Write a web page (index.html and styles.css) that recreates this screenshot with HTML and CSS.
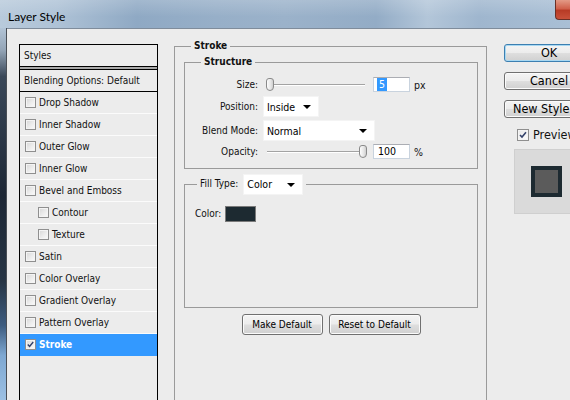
FILE: index.html
```html
<!DOCTYPE html>
<html>
<head>
<meta charset="utf-8">
<title>Layer Style</title>
<link rel="stylesheet" href="styles.css">
</head>
<body>
<div class="window">
  <header class="titlebar">
    <span class="title">Layer Style</span>
    <span class="close"></span>
  </header>
  <div class="frame">
    <div class="edge"></div>
    <main class="client">
      <nav class="styles">
        <div class="styles-head">Styles</div>
        <div class="styles-sep"></div>
        <div class="styles-blend">Blending Options: Default</div>
        <ul class="fx">
          <li class="fx-item"><span class="cb"></span>Drop Shadow</li>
          <li class="fx-item"><span class="cb"></span>Inner Shadow</li>
          <li class="fx-item"><span class="cb"></span>Outer Glow</li>
          <li class="fx-item"><span class="cb"></span>Inner Glow</li>
          <li class="fx-item"><span class="cb"></span>Bevel and Emboss</li>
          <li class="fx-item sub"><span class="cb"></span>Contour</li>
          <li class="fx-item sub"><span class="cb"></span>Texture</li>
          <li class="fx-item"><span class="cb"></span>Satin</li>
          <li class="fx-item"><span class="cb"></span>Color Overlay</li>
          <li class="fx-item"><span class="cb"></span>Gradient Overlay</li>
          <li class="fx-item"><span class="cb"></span>Pattern Overlay</li>
          <li class="fx-item active"><span class="cb"><svg class="tick" viewBox="0 0 11 11"><path d="M2.2 5.4 L4.4 7.8 L8.8 2.4"/></svg></span>Stroke</li>
        </ul>
      </nav>

      <fieldset class="group stroke">
        <legend class="legend stroke-legend">Stroke</legend>
        <div class="stroke-body">
          <fieldset class="group structure">
            <legend class="legend structure-legend">Structure</legend>
            <div class="form">
              <span class="lbl">Size:</span>
              <div class="ctl">
                <div class="slider"><span class="thumb" style="margin-left:3px"></span></div>
                <span class="field"><span class="sel">5</span></span>
                <span class="unit">px</span>
              </div>
              <span class="lbl">Position:</span>
              <div class="ctl"><span class="dropdown dd-pos">Inside<i class="arrow"></i></span></div>
              <span class="lbl">Blend Mode:</span>
              <div class="ctl"><span class="dropdown dd-blend">Normal<i class="arrow"></i></span></div>
              <span class="lbl">Opacity:</span>
              <div class="ctl">
                <div class="slider"><span class="thumb" style="margin-left:96px"></span></div>
                <span class="field">100</span>
                <span class="unit">%</span>
              </div>
            </div>
          </fieldset>

          <fieldset class="group fill">
            <legend class="legend fill-legend"><span>Fill Type:</span><span class="dropdown dd-fill">Color<i class="arrow"></i></span></legend>
            <div class="fill-body">
              <div class="color-row"><span>Color:</span><span class="swatch"></span></div>
            </div>
          </fieldset>

          <div class="defaults">
            <button class="btn btn-make">Make Default</button>
            <button class="btn btn-reset">Reset to Default</button>
          </div>
        </div>
      </fieldset>

      <aside class="actions">
        <button class="btn big focus">OK</button>
        <button class="btn big">Cancel</button>
        <button class="btn big">New Style...</button>
        <label class="preview-check"><span class="cb white"><svg class="tick" viewBox="0 0 11 11"><path d="M2.2 5.4 L4.4 7.8 L8.8 2.4"/></svg></span>Preview</label>
        <div class="preview"><div class="pv-square"></div></div>
      </aside>
    </main>
  </div>
</div>
</body>
</html>
```

FILE: styles.css
```css
html, body {
  margin: 0;
  padding: 0;
  width: 570px;
  height: 400px;
  overflow: hidden;
  background: #ececec;
}

.window {
  width: 570px;
  height: 400px;
  display: flex;
  flex-direction: column;
  font-family: "DejaVu Sans Condensed", "DejaVu Sans", sans-serif;
  font-stretch: condensed;
  font-size: 10px;
  color: #111;
}

/* ---------- title bar ---------- */
.titlebar {
  height: 28px;
  flex-shrink: 0;
  display: flex;
  align-items: flex-start;
  background:
    linear-gradient(180deg, rgba(255,255,255,0.18) 0%, rgba(255,255,255,0) 60%),
    linear-gradient(90deg, #b8cadb 0%, #aec2d6 10%, #8fa9c4 24%, #97afc8 38%, #9bb2ca 50%, #93acc6 66%, #b3c6d9 75%, #9fb6ce 84%, #a9bfd5 100%);
}
.title {
  font-family: Lato, "DejaVu Sans", sans-serif;
  font-stretch: normal;
  font-size: 12px;
  color: #000;
  margin: 9px 0 0 8px;
}
.close {
  margin-left: auto;
  width: 14px;
  height: 19px;
  border: 1px solid #6b3026;
  border-top: none;
  border-right: none;
  border-radius: 0 0 0 4px;
  background: linear-gradient(180deg, #e39a86 0%, #d0614b 45%, #b83b26 55%, #c9513a 100%);
}

/* ---------- frame ---------- */
.frame {
  flex: 1;
  display: flex;
  min-height: 0;
}
.edge {
  width: 6px;
  flex-shrink: 0;
  border-right: 1px solid #4a4f56;
  background: linear-gradient(180deg, #b2c4d6 0%, #93a4b6 6%, #3a4859 13%, #1d2735 45%, #263444 68%, #3d5c80 80%, #7ea8d2 88%, #9cc0e3 100%);
}
.client {
  flex: 1;
  min-width: 0;
  display: flex;
  align-items: flex-start;
  padding: 11px 0 0 12px;
  border-top: 1px solid #7f8c9b;
  overflow: hidden;
  background: #ececec;
}
.client > * { flex-shrink: 0; }

/* ---------- styles list ---------- */
.styles {
  margin-top: 4px;
  width: 139px;
  height: 400px;
  box-sizing: border-box;
  border: 1px solid #000;
}
.styles-head {
  height: 21px;
  line-height: 21px;
  padding-left: 4px;
  border-bottom: 1px solid #000;
}
.styles-sep {
  height: 2px;
  background: #a9a9a9;
  border-bottom: 1px solid #000;
}
.styles-blend {
  height: 21px;
  line-height: 21px;
  padding-left: 4px;
  border-bottom: 1px solid #000;
}
.fx {
  list-style: none;
  margin: 0;
  padding: 0;
}
.fx-item {
  height: 21px;
  border-bottom: 1px solid #fbfbfb;
  display: flex;
  align-items: center;
  gap: 3px;
  padding-left: 5px;
}
.fx-item.sub { padding-left: 18px; }
.fx-item.active {
  background: #3399ff;
  color: #fff;
  font-weight: bold;
  border-bottom-color: #3399ff;
}

.cb {
  width: 11px;
  height: 11px;
  box-sizing: border-box;
  border: 1px solid #8f8f8f;
  background: linear-gradient(135deg, #d6d6d6 0%, #ececec 55%, #fbfbfb 100%);
  box-shadow: inset 0 0 0 1px #f4f4f4;
  display: inline-flex;
  flex-shrink: 0;
}
.cb.white {
  width: 12px;
  height: 12px;
  background: linear-gradient(135deg, #e8e8e8 0%, #fdfdfd 100%);
}
.tick {
  width: 100%;
  height: 100%;
  fill: none;
  stroke: #33416a;
  stroke-width: 1.7;
}

/* ---------- group boxes ---------- */
.group {
  margin: 0;
  padding: 0;
  min-width: 0;
  border: 1px solid #9a9a9a;
}
.legend {
  padding: 0 3px;
  line-height: 12px;
  font-weight: bold;
  color: #111;
}
.stroke {
  width: 313px;
  height: 380px;
  box-sizing: border-box;
  margin-left: 16px;
}
.stroke-legend { margin-left: 16px; }
.stroke-body { padding: 4px 8px 0 9px; }

.structure-legend { margin-left: 16px; }
.form {
  display: grid;
  grid-template-columns: 73px auto;
  grid-template-rows: 17px 21px 21px 15px;
  column-gap: 5px;
  row-gap: 3px;
  padding: 8px 0 9px 0;
}
.lbl {
  text-align: right;
  align-self: center;
}
.ctl {
  display: flex;
  align-items: center;
}

.slider {
  width: 106px;
  height: 15px;
  box-sizing: border-box;
  display: flex;
  align-items: center;
  background:
    linear-gradient(#a3a3a3, #a3a3a3) 4px 7px / 98px 1px no-repeat,
    linear-gradient(#ffffff, #ffffff) 4px 8px / 98px 1px no-repeat;
}
.thumb {
  width: 8px;
  height: 13px;
  box-sizing: border-box;
  border: 1px solid #8a8a8a;
  border-radius: 3px 3px 4px 4px;
  background: linear-gradient(90deg, #fdfdfd 0%, #e6e6e6 60%, #cfcfcf 100%);
}
.field {
  width: 37px;
  height: 15px;
  box-sizing: border-box;
  margin-left: 4px;
  border: 1px solid #c9d3de;
  border-top-color: #abadb3;
  background: #fff;
  padding-left: 4px;
  line-height: 13px;
  font-size: 10.5px;
  color: #000;
}
.sel {
  display: inline-block;
  background: #3399ff;
  color: #fff;
  padding: 0 2px;
  margin-left: -1px;
}
.unit {
  margin-left: 4px;
  font-size: 10.5px;
}

.dropdown {
  height: 21px;
  box-sizing: border-box;
  background: #fff;
  border: 1px solid #f4f4f4;
  display: flex;
  align-items: center;
  padding-left: 3px;
  font-size: 10.5px;
  font-weight: normal;
  color: #000;
}
.arrow {
  margin-left: auto;
  margin-right: 7px;
  width: 0;
  height: 0;
  border-left: 4px solid transparent;
  border-right: 4px solid transparent;
  border-top: 4px solid #000;
}
.dd-pos { width: 56px; }
.dd-blend { width: 112px; }
.dd-fill { width: 60px; }

.fill { margin-top: 5px; }
.fill-legend {
  margin-left: 12px;
  display: flex;
  align-items: center;
  gap: 5px;
  line-height: 21px;
  font-weight: normal;
  color: #111;
}
.fill-legend > span:first-child { margin-top: -3px; }
.fill-body {
  height: 112px;
  box-sizing: border-box;
  padding: 10px 0 0 10px;
}
.color-row {
  display: flex;
  align-items: center;
  gap: 4px;
  height: 17px;
}
.swatch {
  width: 31px;
  height: 16px;
  box-sizing: border-box;
  border: 1px solid #7a7a7a;
  background: #1d2a31;
}

/* ---------- buttons ---------- */
.btn {
  font: inherit;
  font-stretch: condensed;
  color: #000;
  padding: 0;
  border: 1px solid #707070;
  border-radius: 3px;
  background: linear-gradient(180deg, #f4f4f4 0%, #ececec 48%, #dedede 52%, #d0d0d0 100%);
  box-shadow: inset 0 0 0 1px #fbfbfb;
  box-sizing: border-box;
  text-align: center;
}
.defaults {
  display: flex;
  justify-content: center;
  gap: 6px;
  margin-top: 6px;
}
.btn-make, .btn-reset { height: 21px; }
.btn-make { width: 81px; }
.btn-reset { width: 92px; }

.actions {
  margin-left: 17px;
  margin-top: 4px;
  width: 86px;
  display: flex;
  flex-direction: column;
  align-items: flex-start;
}
.btn.big {
  width: 86px;
  height: 18px;
  font-size: 12.5px;
  line-height: 16px;
  margin-bottom: 10px;
  white-space: nowrap;
  overflow: hidden;
  text-align: left;
  padding-left: 8px;
}
.btn.big:nth-child(1) { padding-left: 36px; }
.btn.big:nth-child(2) { padding-left: 25px; }
.btn.big.focus {
  border-color: #3c7fb1;
  box-shadow: inset 0 0 0 1px #a8d8f2;
}
.preview-check {
  display: flex;
  align-items: center;
  gap: 4px;
  margin: -1px 0 0 13px;
  font-size: 12.5px;
  white-space: nowrap;
}
.preview {
  margin: 7px 0 0 10px;
  width: 65px;
  height: 65px;
  box-sizing: border-box;
  background: #dadada;
  border: 1px solid #cfcfcf;
  display: flex;
  align-items: center;
  justify-content: center;
}
.pv-square {
  width: 31px;
  height: 31px;
  box-sizing: border-box;
  border: 4px solid #1d2a31;
  background: #5b5b5b;
}
```
